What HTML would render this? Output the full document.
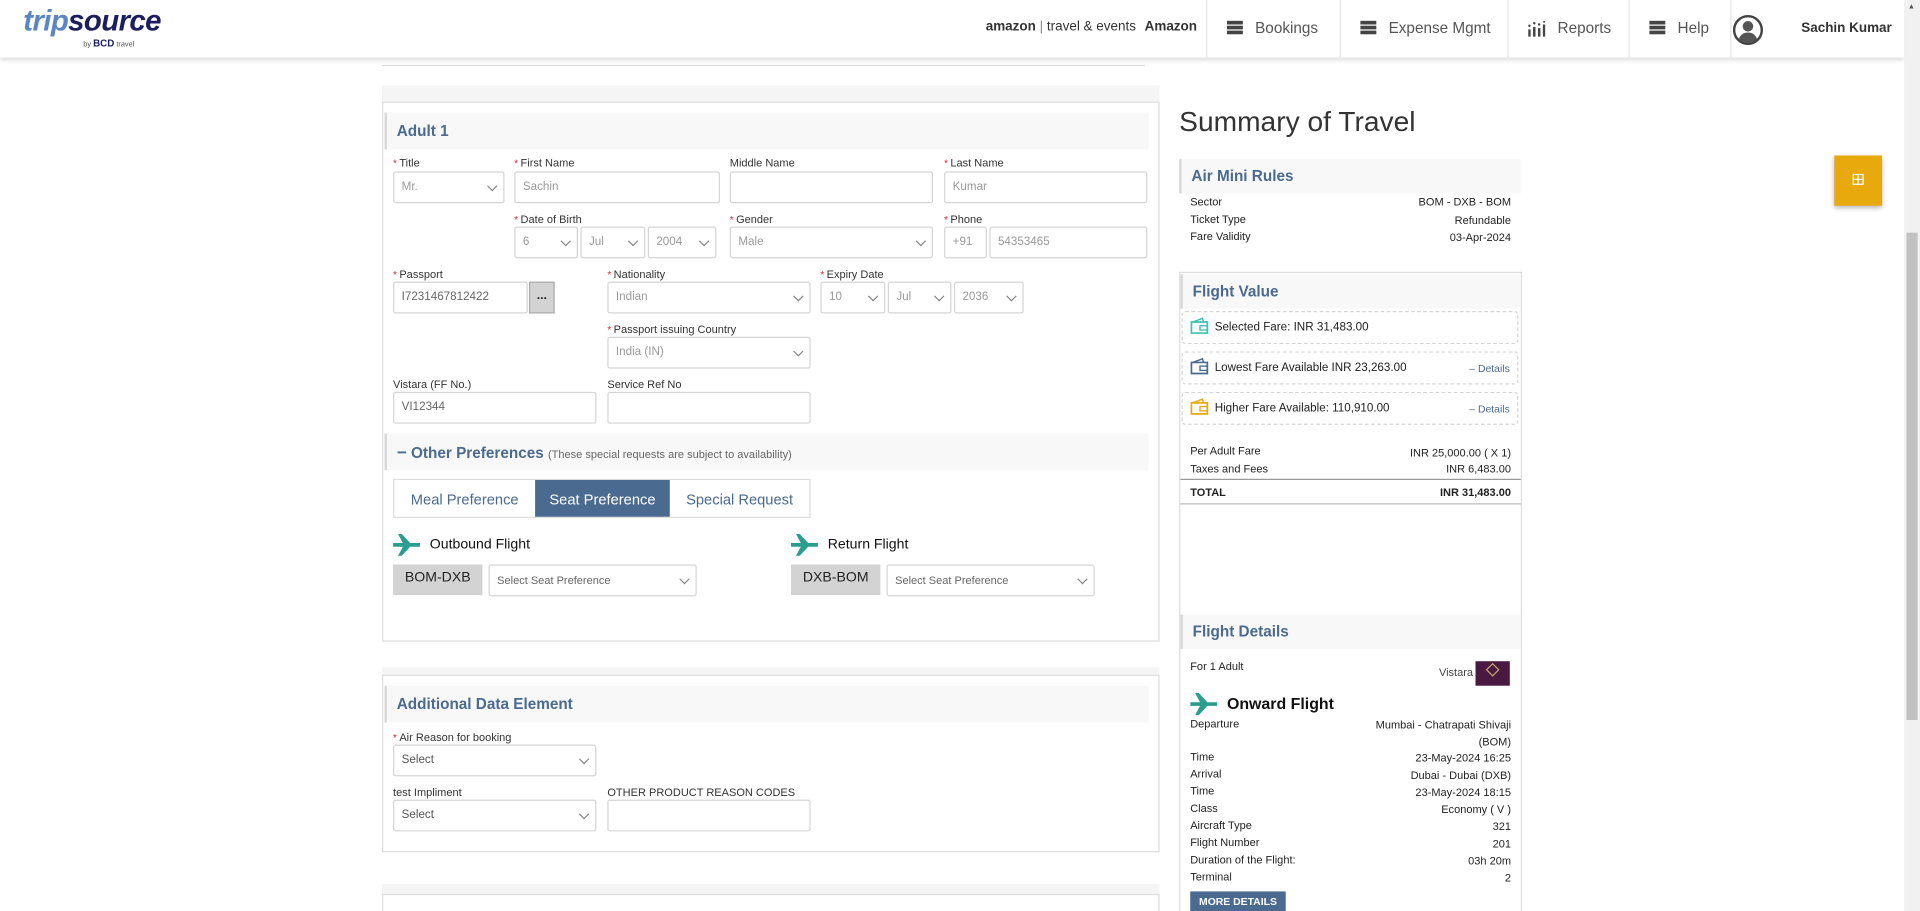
<!DOCTYPE html>
<html><head><meta charset="utf-8"><style>
*{box-sizing:border-box;margin:0;padding:0}
html,body{width:1920px;height:911px;overflow:hidden;background:#fff}
#w{position:relative;width:1920px;height:911px;overflow:hidden}
#s{position:absolute;left:0;top:0;width:1568px;height:744px;overflow:hidden;transform:scale(1.22449);transform-origin:0 0;font-family:"Liberation Sans",Arial,sans-serif;color:#333}
.a{position:absolute}
.lb{position:absolute;font-size:9px;color:#333;white-space:nowrap}
.lb b{color:#d9232e;font-weight:normal;font-size:8px;margin-right:2px}
.in{position:absolute;height:26px;border:1px solid #d5d5d5;border-radius:2px;background:#fff;font-size:9.5px;color:#999;padding:0 6px;line-height:24px;white-space:nowrap}
.sel:after{content:"";position:absolute;right:6px;top:8px;width:5px;height:5px;border-right:1.3px solid #888;border-bottom:1.3px solid #888;transform:rotate(45deg)}
.hd{position:absolute;background:#f8f8f8;border-left:2px solid #d8d8d8;color:#4a6a8f;font-size:12.5px;font-weight:bold;padding-left:8px}
.nav{position:absolute;top:0;height:47px;border-left:1px solid #e6e6e6;font-size:12.5px;color:#555;line-height:47px}
.hm{display:inline-block;width:13px;height:11px;border-top:3px solid #444;border-bottom:3px solid #444;position:relative;vertical-align:middle;margin-right:10px;top:-1px}
.hm:after{content:"";position:absolute;left:0;right:0;top:1px;height:3px;background:#444}
.r{position:absolute;font-size:9px;color:#222;white-space:nowrap}
.rr{position:absolute;font-size:9px;color:#222;white-space:nowrap;text-align:right}
.fb{position:absolute;left:965px;width:275px;height:27px;border:1px dashed #d5d5d5;border-radius:3px;font-size:9.5px;color:#222;line-height:26px;padding-left:26px}
.fb .dt{position:absolute;right:6px;top:0;color:#4a6a8f;font-size:8.5px}
</style></head><body><div id="w"><div id="s">
<div class="a" style="left:0;top:0;width:1555px;height:47px;background:#fff;box-shadow:0 2px 4px rgba(0,0,0,.15)"></div>
<div class="a" style="left:19px;top:4px;font-size:24px;font-style:italic;font-weight:bold;letter-spacing:-0.5px"><span style="color:#5a86c5">trip</span><span style="color:#1d1e5e">source</span></div>
<div class="a" style="left:68px;top:31px;font-size:6px;color:#555">by <b style="font-size:8px;color:#1d1e5e">BCD</b> travel</div>
<div class="a" style="left:805px;top:16px;font-size:11px;color:#333"><b>amazon</b> <span style="color:#888">|</span> travel &amp; events <b style="margin-left:4px;font-size:11px">Amazon</b></div>
<div class="nav" style="left:985px;width:109px;padding-left:16px"><span class="hm"></span>Bookings</div>
<div class="nav" style="left:1094px;width:137px;padding-left:16px"><span class="hm"></span>Expense Mgmt</div>
<div class="nav" style="left:1231px;width:99px;padding-left:16px"><svg width="14" height="13" style="vertical-align:middle;margin-right:10px" viewBox="0 0 14 13"><g fill="#444"><rect x="0" y="7" width="2" height="6"/><rect x="4" y="5" width="2" height="8"/><rect x="8" y="6" width="2" height="7"/><rect x="12" y="3" width="2" height="10"/><circle cx="1" cy="4" r="1"/><circle cx="5" cy="2" r="1"/><circle cx="9" cy="3" r="1"/><circle cx="13" cy="0.8" r="0.8"/></g></svg>Reports</div>
<div class="nav" style="left:1330px;width:83px;padding-left:16px"><span class="hm"></span>Help</div>
<div class="nav" style="left:1413px;width:142px"></div>
<svg class="a" style="left:1415px;top:12px" width="25" height="25" viewBox="0 0 25 25"><circle cx="12.5" cy="12.5" r="11.3" fill="#fff" stroke="#444" stroke-width="2"/><circle cx="12.5" cy="9.5" r="4.3" fill="#555"/><path d="M5 20c1.5-4 4-5.5 7.5-5.5S18.5 16 20 20c-2 2-4.5 3-7.5 3S7 22 5 20z" fill="#555"/></svg>
<div class="a" style="left:1471px;top:17px;font-size:11px;font-weight:bold;color:#333">Sachin Kumar</div>
<div class="a" style="left:1555px;top:0;width:13px;height:744px;background:#f1f1f1"></div>
<div class="a" style="left:1557px;top:190px;width:9px;height:398px;background:#c1c1c1"></div>
<div class="a" style="left:1558px;top:3px;font-size:6px;color:#555">▲</div>

<div class="a" style="left:312px;top:53px;width:623px;height:1px;background:#ddd"></div>
<div class="a" style="left:312px;top:70px;width:635px;height:13px;background:#f5f5f5"></div>
<div class="a" style="left:312px;top:83px;width:635px;height:441px;border:1px solid #ddd"></div>
<div class="hd" style="left:314px;top:92px;width:624px;height:30px;line-height:30px">Adult 1</div>
<div class="lb" style="left:321px;top:128px"><b>*</b>Title</div>
<div class="lb" style="left:420px;top:128px"><b>*</b>First Name</div>
<div class="lb" style="left:596px;top:128px">Middle Name</div>
<div class="lb" style="left:771px;top:128px"><b>*</b>Last Name</div>
<div class="in sel" style="left:321px;top:140px;width:91px">Mr.</div>
<div class="in" style="left:420px;top:140px;width:168px">Sachin</div>
<div class="in" style="left:596px;top:140px;width:166px"></div>
<div class="in" style="left:771px;top:140px;width:166px">Kumar</div>
<div class="lb" style="left:420px;top:174px"><b>*</b>Date of Birth</div>
<div class="lb" style="left:596px;top:174px"><b>*</b>Gender</div>
<div class="lb" style="left:771px;top:174px"><b>*</b>Phone</div>
<div class="in sel" style="left:420px;top:185px;width:52px">6</div>
<div class="in sel" style="left:474px;top:185px;width:53px">Jul</div>
<div class="in sel" style="left:529px;top:185px;width:56px">2004</div>
<div class="in sel" style="left:596px;top:185px;width:166px">Male</div>
<div class="in" style="left:771px;top:185px;width:35px">+91</div>
<div class="in" style="left:808px;top:185px;width:129px">54353465</div>
<div class="lb" style="left:321px;top:219px"><b>*</b>Passport</div>
<div class="lb" style="left:496px;top:219px"><b>*</b>Nationality</div>
<div class="lb" style="left:670px;top:219px"><b>*</b>Expiry Date</div>
<div class="in" style="left:321px;top:230px;width:110px;color:#666">I7231467812422</div>
<div class="a" style="left:432px;top:230px;width:21px;height:26px;background:#d3d3d3;border:1px solid #aaa;font-size:10px;font-weight:bold;text-align:center;line-height:22px;color:#222">...</div>
<div class="in sel" style="left:496px;top:230px;width:166px">Indian</div>
<div class="in sel" style="left:670px;top:230px;width:53px">10</div>
<div class="in sel" style="left:725px;top:230px;width:52px">Jul</div>
<div class="in sel" style="left:779px;top:230px;width:57px">2036</div>
<div class="lb" style="left:496px;top:264px"><b>*</b>Passport issuing Country</div>
<div class="in sel" style="left:496px;top:275px;width:166px">India (IN)</div>
<div class="lb" style="left:321px;top:309px">Vistara (FF No.)</div>
<div class="lb" style="left:496px;top:309px">Service Ref No</div>
<div class="in" style="left:321px;top:320px;width:166px;color:#666">VI12344</div>
<div class="in" style="left:496px;top:320px;width:166px"></div>
<div class="hd" style="left:314px;top:354px;width:624px;height:30px;line-height:30px;font-weight:normal">
<span style="font-weight:bold;font-size:14px">−</span> <b style="font-size:12.5px">Other Preferences</b> <span style="font-size:9px;color:#666">(These special requests are subject to availability)</span></div>
<div class="a" style="left:321px;top:391px;width:341px;height:32px;border:1px solid #ddd"></div>
<div class="a" style="left:322px;top:392px;width:115px;height:30px;line-height:32px;text-align:center;font-size:12px;color:#4a6a8f">Meal Preference</div>
<div class="a" style="left:437px;top:392px;width:110px;height:30px;line-height:32px;text-align:center;font-size:12px;color:#fff;background:#4a6a8f">Seat Preference</div>
<div class="a" style="left:547px;top:392px;width:114px;height:30px;line-height:32px;text-align:center;font-size:12px;color:#4a6a8f">Special Request</div>
<svg class="a" style="left:321px;top:436px" width="22" height="18" viewBox="0 0 22 18"><path d="M0 7.5h8L4 0h3l7 7.5h8v3h-8l-7 7.5H4l4-7.5H0z" fill="#2a9d8f"/></svg>
<div class="a" style="left:351px;top:439px;font-size:11.5px;color:#111">Outbound Flight</div>
<svg class="a" style="left:646px;top:436px" width="22" height="18" viewBox="0 0 22 18"><path d="M0 7.5h8L4 0h3l7 7.5h8v3h-8l-7 7.5H4l4-7.5H0z" fill="#2a9d8f"/></svg>
<div class="a" style="left:676px;top:439px;font-size:11.5px;color:#111">Return Flight</div>
<div class="a" style="left:321px;top:461px;width:73px;height:25px;background:#d3d3d3;font-size:11.5px;line-height:23px;text-align:center;color:#222">BOM-DXB</div>
<div class="in sel" style="left:399px;top:461px;width:170px;height:26px;font-size:9px;color:#666">Select Seat Preference</div>
<div class="a" style="left:646px;top:461px;width:73px;height:25px;background:#d3d3d3;font-size:11.5px;line-height:23px;text-align:center;color:#222">DXB-BOM</div>
<div class="in sel" style="left:724px;top:461px;width:170px;height:26px;font-size:9px;color:#666">Select Seat Preference</div>
<div class="a" style="left:312px;top:545px;width:635px;height:6px;background:#f5f5f5"></div>
<div class="a" style="left:312px;top:551px;width:635px;height:145px;border:1px solid #ddd"></div>
<div class="hd" style="left:314px;top:560px;width:624px;height:30px;line-height:30px">Additional Data Element</div>
<div class="lb" style="left:321px;top:597px"><b>*</b>Air Reason for booking</div>
<div class="in sel" style="left:321px;top:608px;width:166px;color:#555">Select</div>
<div class="lb" style="left:321px;top:642px">test Impliment</div>
<div class="lb" style="left:496px;top:642px">OTHER PRODUCT REASON CODES</div>
<div class="in sel" style="left:321px;top:653px;width:166px;color:#555">Select</div>
<div class="in" style="left:496px;top:653px;width:166px"></div>
<div class="a" style="left:312px;top:722px;width:635px;height:8px;background:#f5f5f5"></div>
<div class="a" style="left:312px;top:730px;width:635px;height:14px;border:1px solid #ddd;border-bottom:none"></div>

<div class="a" style="left:963px;top:86px;font-size:23px;color:#333">Summary of Travel</div>
<div class="hd" style="left:963px;top:130px;width:279px;height:28px;line-height:28px">Air Mini Rules</div>
<div class="r" style="left:972px;top:160px">Sector</div><div class="rr" style="right:334px;top:160px">BOM - DXB - BOM</div>
<div class="r" style="left:972px;top:174px">Ticket Type</div><div class="rr" style="right:334px;top:175px">Refundable</div>
<div class="r" style="left:972px;top:188px">Fare Validity</div><div class="rr" style="right:334px;top:189px">03-Apr-2024</div>
<div class="a" style="left:963px;top:222px;width:280px;height:522px;border:1px solid #ddd;border-bottom:none"></div>
<div class="hd" style="left:964px;top:224px;width:278px;height:28px;line-height:28px">Flight Value</div>
<div class="fb" style="top:254px">Selected Fare: INR 31,483.00</div>
<div class="fb" style="top:287px">Lowest Fare Available INR 23,263.00<span class="dt">– Details</span></div>
<div class="fb" style="top:320px">Higher Fare Available: 110,910.00<span class="dt">– Details</span></div>
<svg class="a" style="left:971px;top:259px" width="17" height="15" viewBox="0 0 17 15"><path d="M2 4h13v9H2z" fill="none" stroke="#3cc3b0" stroke-width="1.4"/><path d="M3 4l8-3 1 3" fill="none" stroke="#3cc3b0" stroke-width="1.2"/><rect x="9" y="7" width="6" height="3.5" fill="none" stroke="#3cc3b0" stroke-width="1.1"/></svg>
<svg class="a" style="left:971px;top:292px" width="17" height="15" viewBox="0 0 17 15"><path d="M2 4h13v9H2z" fill="none" stroke="#4a6a8f" stroke-width="1.4"/><path d="M3 4l8-3 1 3" fill="none" stroke="#4a6a8f" stroke-width="1.2"/><rect x="9" y="7" width="6" height="3.5" fill="none" stroke="#4a6a8f" stroke-width="1.1"/></svg>
<svg class="a" style="left:971px;top:325px" width="17" height="15" viewBox="0 0 17 15"><path d="M2 4h13v9H2z" fill="none" stroke="#e8a90c" stroke-width="1.4"/><path d="M3 4l8-3 1 3" fill="none" stroke="#e8a90c" stroke-width="1.2"/><rect x="9" y="7" width="6" height="3.5" fill="none" stroke="#e8a90c" stroke-width="1.1"/></svg>
<div class="r" style="left:972px;top:363px">Per Adult Fare</div><div class="rr" style="right:334px;top:365px">INR 25,000.00 ( X 1)</div>
<div class="r" style="left:972px;top:378px">Taxes and Fees</div><div class="rr" style="right:334px;top:378px">INR 6,483.00</div>
<div class="a" style="left:964px;top:391px;width:278px;height:1px;background:#999"></div>
<div class="r" style="left:972px;top:397px;font-weight:bold">TOTAL</div><div class="rr" style="right:334px;top:397px;font-weight:bold">INR 31,483.00</div>
<div class="a" style="left:964px;top:411px;width:278px;height:1px;background:#bbb"></div>
<div class="hd" style="left:964px;top:502px;width:278px;height:28px;line-height:28px">Flight Details</div>
<div class="r" style="left:972px;top:539px">For 1 Adult</div>
<div class="rr" style="right:365px;top:544px;color:#444">Vistara</div>
<div class="a" style="left:1205px;top:540px;width:28px;height:20px;background:#4a1942"><div style="width:8px;height:8px;border:1px solid #c9a46a;transform:rotate(45deg);margin:3px auto 0"></div></div>
<svg class="a" style="left:972px;top:566px" width="22" height="18" viewBox="0 0 22 18"><path d="M0 7.5h8L4 0h3l7 7.5h8v3h-8l-7 7.5H4l4-7.5H0z" fill="#2a9d8f"/></svg>
<div class="a" style="left:1002px;top:567px;font-size:13px;font-weight:bold;color:#111">Onward Flight</div>
<div class="r" style="left:972px;top:586px">Departure</div><div class="rr" style="right:334px;top:587px">Mumbai - Chatrapati Shivaji</div>
<div class="rr" style="right:334px;top:601px">(BOM)</div>
<div class="r" style="left:972px;top:613px">Time</div><div class="rr" style="right:334px;top:614px">23-May-2024 16:25</div>
<div class="r" style="left:972px;top:627px">Arrival</div><div class="rr" style="right:334px;top:628px">Dubai - Dubai (DXB)</div>
<div class="r" style="left:972px;top:641px">Time</div><div class="rr" style="right:334px;top:642px">23-May-2024 18:15</div>
<div class="r" style="left:972px;top:655px">Class</div><div class="rr" style="right:334px;top:656px">Economy ( V )</div>
<div class="r" style="left:972px;top:669px">Aircraft Type</div><div class="rr" style="right:334px;top:670px">321</div>
<div class="r" style="left:972px;top:683px">Flight Number</div><div class="rr" style="right:334px;top:684px">201</div>
<div class="r" style="left:972px;top:697px">Duration of the Flight:</div><div class="rr" style="right:334px;top:698px">03h 20m</div>
<div class="r" style="left:972px;top:711px">Terminal</div><div class="rr" style="right:334px;top:712px">2</div>
<div class="a" style="left:972px;top:728px;width:78px;height:16px;background:#4a6a8f;color:#fff;font-size:8.5px;font-weight:bold;text-align:center;line-height:16px">MORE DETAILS</div>

<div class="a" style="left:1498px;top:127px;width:39px;height:41px;background:#e8a90c;box-shadow:0 2px 4px rgba(0,0,0,.3)"><div style="width:9px;height:9px;border:1.2px solid #fff;margin:15px auto 0;position:relative"><div style="position:absolute;left:3px;top:0;width:1px;height:7px;background:#fff"></div><div style="position:absolute;top:3px;left:0;height:1px;width:7px;background:#fff"></div></div></div>
</div></div></body></html>
